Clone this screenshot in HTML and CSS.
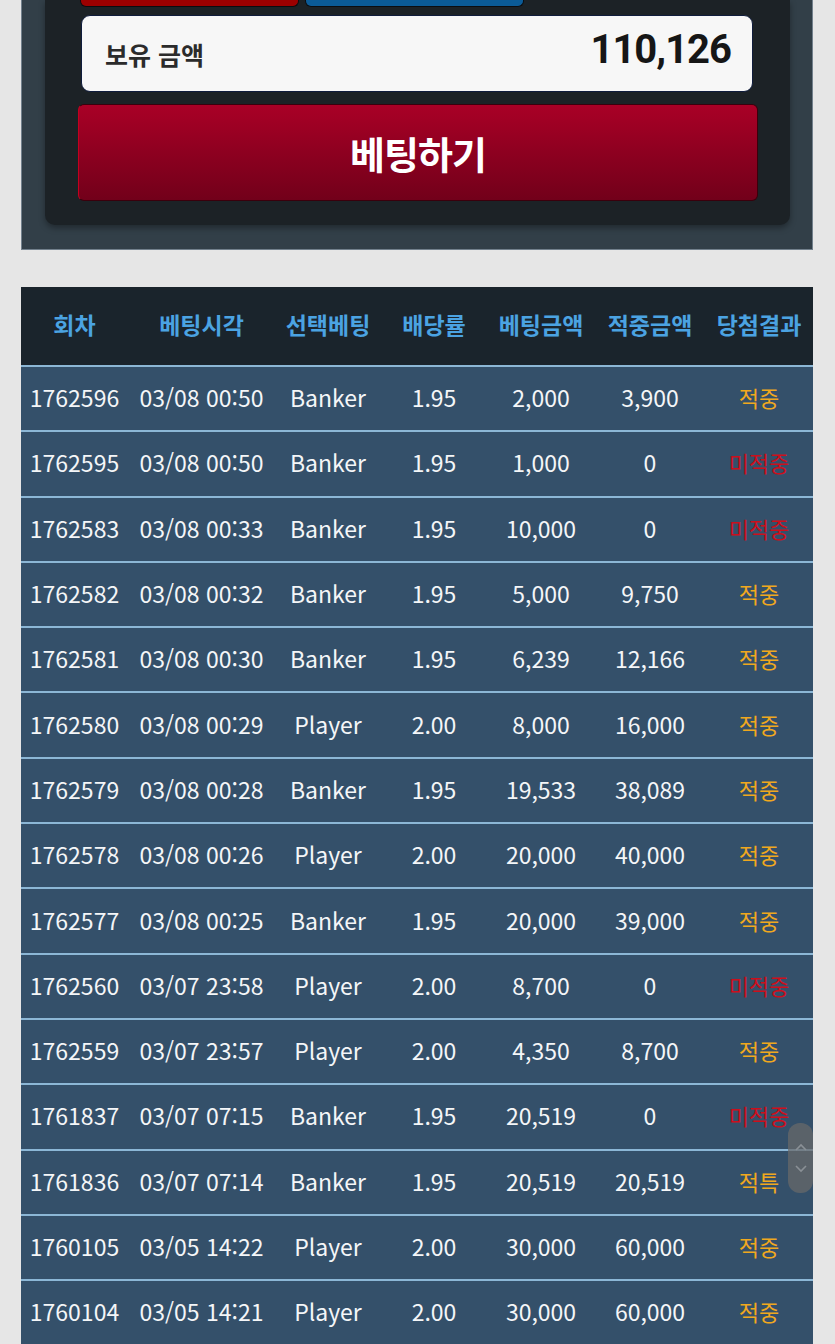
FILE: index.html
```html
<!DOCTYPE html>
<html lang="ko">
<head>
<meta charset="utf-8">
<title>베팅내역</title>
<link rel="stylesheet" href="styles.css">
</head>
<body>
<div class="page">
  <section class="wallet-panel">
    <div class="wallet-inner">
      <div class="choice-row">
        <div class="choice choice-red"></div>
        <div class="choice choice-blue"></div>
      </div>
      <div class="balance">
        <span class="balance-label">보유 금액</span>
        <span class="balance-value">110,126</span>
      </div>
      <button class="bet-btn">베팅하기</button>
    </div>
  </section>

  <div class="table-wrap">
    <table class="history">
      <colgroup>
        <col class="c1"><col class="c2"><col class="c3"><col class="c4"><col class="c5"><col class="c6"><col class="c7">
      </colgroup>
      <thead>
        <tr><th>회차</th><th>베팅시각</th><th>선택베팅</th><th>배당률</th><th>베팅금액</th><th>적중금액</th><th>당첨결과</th></tr>
      </thead>
      <tbody>
        <tr><td>1762596</td><td>03/08 00:50</td><td>Banker</td><td>1.95</td><td>2,000</td><td>3,900</td><td class="win">적중</td></tr>
        <tr><td>1762595</td><td>03/08 00:50</td><td>Banker</td><td>1.95</td><td>1,000</td><td>0</td><td class="lose">미적중</td></tr>
        <tr><td>1762583</td><td>03/08 00:33</td><td>Banker</td><td>1.95</td><td>10,000</td><td>0</td><td class="lose">미적중</td></tr>
        <tr><td>1762582</td><td>03/08 00:32</td><td>Banker</td><td>1.95</td><td>5,000</td><td>9,750</td><td class="win">적중</td></tr>
        <tr><td>1762581</td><td>03/08 00:30</td><td>Banker</td><td>1.95</td><td>6,239</td><td>12,166</td><td class="win">적중</td></tr>
        <tr><td>1762580</td><td>03/08 00:29</td><td>Player</td><td>2.00</td><td>8,000</td><td>16,000</td><td class="win">적중</td></tr>
        <tr><td>1762579</td><td>03/08 00:28</td><td>Banker</td><td>1.95</td><td>19,533</td><td>38,089</td><td class="win">적중</td></tr>
        <tr><td>1762578</td><td>03/08 00:26</td><td>Player</td><td>2.00</td><td>20,000</td><td>40,000</td><td class="win">적중</td></tr>
        <tr><td>1762577</td><td>03/08 00:25</td><td>Banker</td><td>1.95</td><td>20,000</td><td>39,000</td><td class="win">적중</td></tr>
        <tr><td>1762560</td><td>03/07 23:58</td><td>Player</td><td>2.00</td><td>8,700</td><td>0</td><td class="lose">미적중</td></tr>
        <tr><td>1762559</td><td>03/07 23:57</td><td>Player</td><td>2.00</td><td>4,350</td><td>8,700</td><td class="win">적중</td></tr>
        <tr><td>1761837</td><td>03/07 07:15</td><td>Banker</td><td>1.95</td><td>20,519</td><td>0</td><td class="lose">미적중</td></tr>
        <tr><td>1761836</td><td>03/07 07:14</td><td>Banker</td><td>1.95</td><td>20,519</td><td>20,519</td><td class="win">적특</td></tr>
        <tr><td>1760105</td><td>03/05 14:22</td><td>Player</td><td>2.00</td><td>30,000</td><td>60,000</td><td class="win">적중</td></tr>
        <tr><td>1760104</td><td>03/05 14:21</td><td>Player</td><td>2.00</td><td>30,000</td><td>60,000</td><td class="win">적중</td></tr>
      </tbody>
    </table>
    <div class="scroll-thumb">
      <svg class="chev" width="14" height="8" viewBox="0 0 14 8"><path d="M2 7 L7 2 L12 7" fill="none" stroke="#8a9096" stroke-width="1.6"/></svg>
      <svg class="chev" width="14" height="8" viewBox="0 0 14 8"><path d="M2 1 L7 6 L12 1" fill="none" stroke="#8a9096" stroke-width="1.6"/></svg>
    </div>
  </div>
</div>
</body>
</html>
```

FILE: styles.css
```css
*, *::before, *::after {
  box-sizing: border-box;
}

html, body {
  margin: 0;
  padding: 0;
  background: #e6e6e6;
  font-family: "Noto Sans CJK KR", "Noto Sans", sans-serif;
}

.page {
  width: 835px;
  height: 1344px;
  overflow: hidden;
}

.wallet-panel {
  margin-left: 21px;
  width: 792px;
  background: #323f48;
  border: 1px solid #72808c;
  border-top: none;
  padding: 0 22px 24px 23px;
}

.wallet-inner {
  background: #1c2226;
  border-radius: 0 0 10px 10px;
  box-shadow: 0 3px 6px rgba(0, 0, 0, 0.35);
  padding: 0 32px 24px 33px;
  display: flex;
  flex-direction: column;
}

.choice-row {
  display: flex;
  gap: 6px;
  padding-left: 2px;
  height: 7px;
}

.choice {
  width: 219px;
  height: 7px;
  border-radius: 0 0 6px 6px;
  border: 1px solid #0b0d10;
  border-top: none;
}

.choice-red { background: #9c0000; }
.choice-blue { background: #0b5b97; }

.balance {
  margin: 8px 5px 0 3px;
  height: 77px;
  background: #f7f7f7;
  border: 1px solid #0f1c3c;
  border-radius: 9px;
  display: flex;
  align-items: center;
  justify-content: space-between;
  padding: 0 21px 0 23px;
}

.balance-label {
  font-size: 25px;
  font-weight: 700;
  color: #2b2b2b;
  margin-top: 0;
}

.balance-value {
  font-family: Roboto, "Noto Sans", sans-serif;
  font-size: 40px;
  font-weight: 700;
  color: #161616;
  letter-spacing: -1px;
  margin-top: -8px;
}

.bet-btn {
  margin-top: 12px;
  height: 97px;
  border: 1px solid #3a000c;
  border-left-color: #c4001e;
  border-radius: 6px;
  background: linear-gradient(#a90026, #72001a);
  color: #ffffff;
  font-family: "Noto Sans CJK KR", sans-serif;
  font-size: 38px;
  font-weight: 700;
  letter-spacing: -1px;
  padding: 0;
  cursor: pointer;
}

.table-wrap {
  position: relative;
  margin: 37px 0 0 21px;
  width: 792px;
}

.history {
  width: 792px;
  border-collapse: collapse;
  table-layout: fixed;
}

.c1 { width: 107px; }
.c2 { width: 147px; }
.c3 { width: 106px; }
.c4 { width: 106px; }
.c5 { width: 108px; }
.c6 { width: 110px; }
.c7 { width: 108px; }

.history th {
  background: #1a242c;
  color: #4ba3e2;
  font-size: 23px;
  font-weight: 700;
  height: 79px;
  padding: 0 0 4px;
  border-bottom: 2px solid #8cb7d6;
  text-align: center;
  white-space: nowrap;
}

.history td {
  background: #34506a;
  color: #f4f6f8;
  font-size: 23px;
  font-weight: 400;
  height: 65.3px;
  padding: 0 0 3px;
  border-bottom: 2px solid #8cb7d6;
  text-align: center;
  white-space: nowrap;
}

.history td.win { color: #f0a81e; font-size: 22px; }
.history td.lose { color: #cc0f1c; font-size: 22px; }

.scroll-thumb {
  position: absolute;
  right: 0;
  top: 836px;
  width: 25px;
  height: 70px;
  border-radius: 12px;
  background: rgba(105, 105, 105, 0.72);
  display: flex;
  flex-direction: column;
  align-items: center;
  justify-content: center;
  gap: 14px;
}

.chev { display: block; }
```
